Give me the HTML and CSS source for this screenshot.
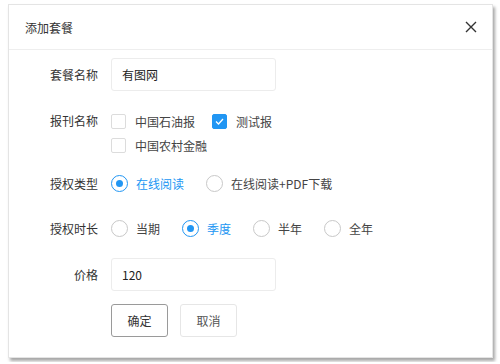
FILE: index.html
```html
<!DOCTYPE html>
<html lang="zh">
<head>
    <meta charset="UTF-8">
    <meta name="viewport" content="width=device-width, initial-scale=1.0">
    <title>添加套餐</title>
    <link rel="stylesheet" href="styles.css">
</head>
<body>
    <div class="dialog">
        <div class="dialog-header">
            <span class="dialog-title">添加套餐</span>
            <button class="close-btn" aria-label="关闭">
                <svg width="12" height="12" viewBox="0 0 12 12"><path d="M1 1L11 11M11 1L1 11" stroke="#333" stroke-width="1.4" fill="none"/></svg>
            </button>
        </div>

        <form class="dialog-body">
            <div class="field field-name">
                <label class="field-label">套餐名称</label>
                <input class="text-input" type="text" value="有图网">
            </div>

            <div class="field field-paper">
                <label class="field-label">报刊名称</label>
                <div class="options options-wrap">
                    <span class="option"><span class="checkbox"></span>中国石油报</span>
                    <span class="option"><span class="checkbox checked"><svg width="9" height="7" viewBox="0 0 9 7"><path d="M1 3.5L3.5 6L8 1" stroke="#fff" stroke-width="1.3" fill="none"/></svg></span>测试报</span>
                    <span class="option option-break"><span class="checkbox"></span>中国农村金融</span>
                </div>
            </div>

            <div class="field field-type">
                <label class="field-label">授权类型</label>
                <div class="options">
                    <span class="option active"><span class="radio checked"></span>在线阅读</span>
                    <span class="option"><span class="radio"></span>在线阅读+PDF下载</span>
                </div>
            </div>

            <div class="field field-term">
                <label class="field-label">授权时长</label>
                <div class="options">
                    <span class="option"><span class="radio"></span>当期</span>
                    <span class="option active"><span class="radio checked"></span>季度</span>
                    <span class="option"><span class="radio"></span>半年</span>
                    <span class="option"><span class="radio"></span>全年</span>
                </div>
            </div>

            <div class="field field-price">
                <label class="field-label">价格</label>
                <input class="text-input" type="text" value="120">
            </div>

            <div class="field field-actions">
                <span class="field-label"></span>
                <button type="button" class="btn btn-primary">确定</button>
                <button type="button" class="btn">取消</button>
            </div>
        </form>
    </div>
</body>
</html>
```

FILE: styles.css
```css
body {
    margin: 0;
    padding: 4px 8px;
    background-color: #fff;
    font-family: "Noto Sans CJK SC", "Noto Sans", sans-serif;
    font-size: 12px;
    color: #333;
}

.dialog {
    width: 483px;
    height: 352px;
    border: 1px solid #e4e4e4;
    background-color: #fff;
    box-shadow: 2px 3px 3px rgba(0, 0, 0, 0.35);
}

.dialog-header {
    height: 44px;
    border-bottom: 1px solid #eee;
    display: flex;
    align-items: center;
    justify-content: space-between;
    padding: 0 15px 0 16px;
}

.dialog-title {
    color: #333;
    font-size: 12px;
}

.close-btn {
    border: none;
    background: none;
    padding: 0;
    width: 12px;
    height: 12px;
    display: flex;
    cursor: pointer;
}

.dialog-body {
    display: flex;
    flex-direction: column;
    padding-top: 8px;
}

.field {
    display: flex;
    align-items: center;
}

.field-label {
    width: 89px;
    flex-shrink: 0;
    text-align: right;
    margin-right: 13px;
    color: #333;
}

.field-paper {
    margin-top: 18px;
    align-items: flex-start;
}

.field-paper .field-label {
    line-height: 24px;
}

.field-type {
    margin-top: 14px;
    height: 24px;
}

.field-term {
    margin-top: 21px;
    height: 24px;
}

.field-price {
    margin-top: 18px;
}

.field-actions {
    margin-top: 13px;
}

.text-input {
    width: 165px;
    height: 33px;
    box-sizing: border-box;
    border: 1px solid #ececec;
    border-radius: 3px;
    padding: 0 10px;
    font-family: inherit;
    font-size: 12px;
    color: #222;
    outline: none;
}

.options {
    display: flex;
    align-items: center;
    color: #444;
}

.options-wrap {
    flex-wrap: wrap;
    width: 240px;
}

.option {
    display: flex;
    align-items: center;
    height: 24px;
    margin-right: 22px;
}

.option-break {
    width: 100%;
}

.option.active {
    color: #2196f3;
}

.checkbox {
    width: 15px;
    height: 15px;
    box-sizing: border-box;
    border: 1px solid #dcdcdc;
    border-radius: 2px;
    margin-right: 9px;
    display: flex;
    align-items: center;
    justify-content: center;
}

.checkbox.checked {
    background-color: #2196f3;
    border-color: #2196f3;
}

.options-wrap .option:first-child {
    margin-right: 17px;
}

.radio {
    width: 17px;
    height: 17px;
    box-sizing: border-box;
    border: 1px solid #c8c8c8;
    border-radius: 50%;
    margin-right: 8px;
    display: flex;
    align-items: center;
    justify-content: center;
}

.radio.checked {
    border: 1.5px solid #2196f3;
}

.radio.checked::after {
    content: "";
    width: 7px;
    height: 7px;
    border-radius: 50%;
    background-color: #2196f3;
}

.btn {
    width: 57px;
    height: 33px;
    border: 1px solid #e6e6e6;
    border-radius: 3px;
    background-color: #fff;
    color: #555;
    font-family: inherit;
    font-size: 12px;
    margin-right: 12px;
    cursor: pointer;
    padding: 0;
}

.btn-primary {
    border-color: #9a9a9a;
    color: #333;
}
```
